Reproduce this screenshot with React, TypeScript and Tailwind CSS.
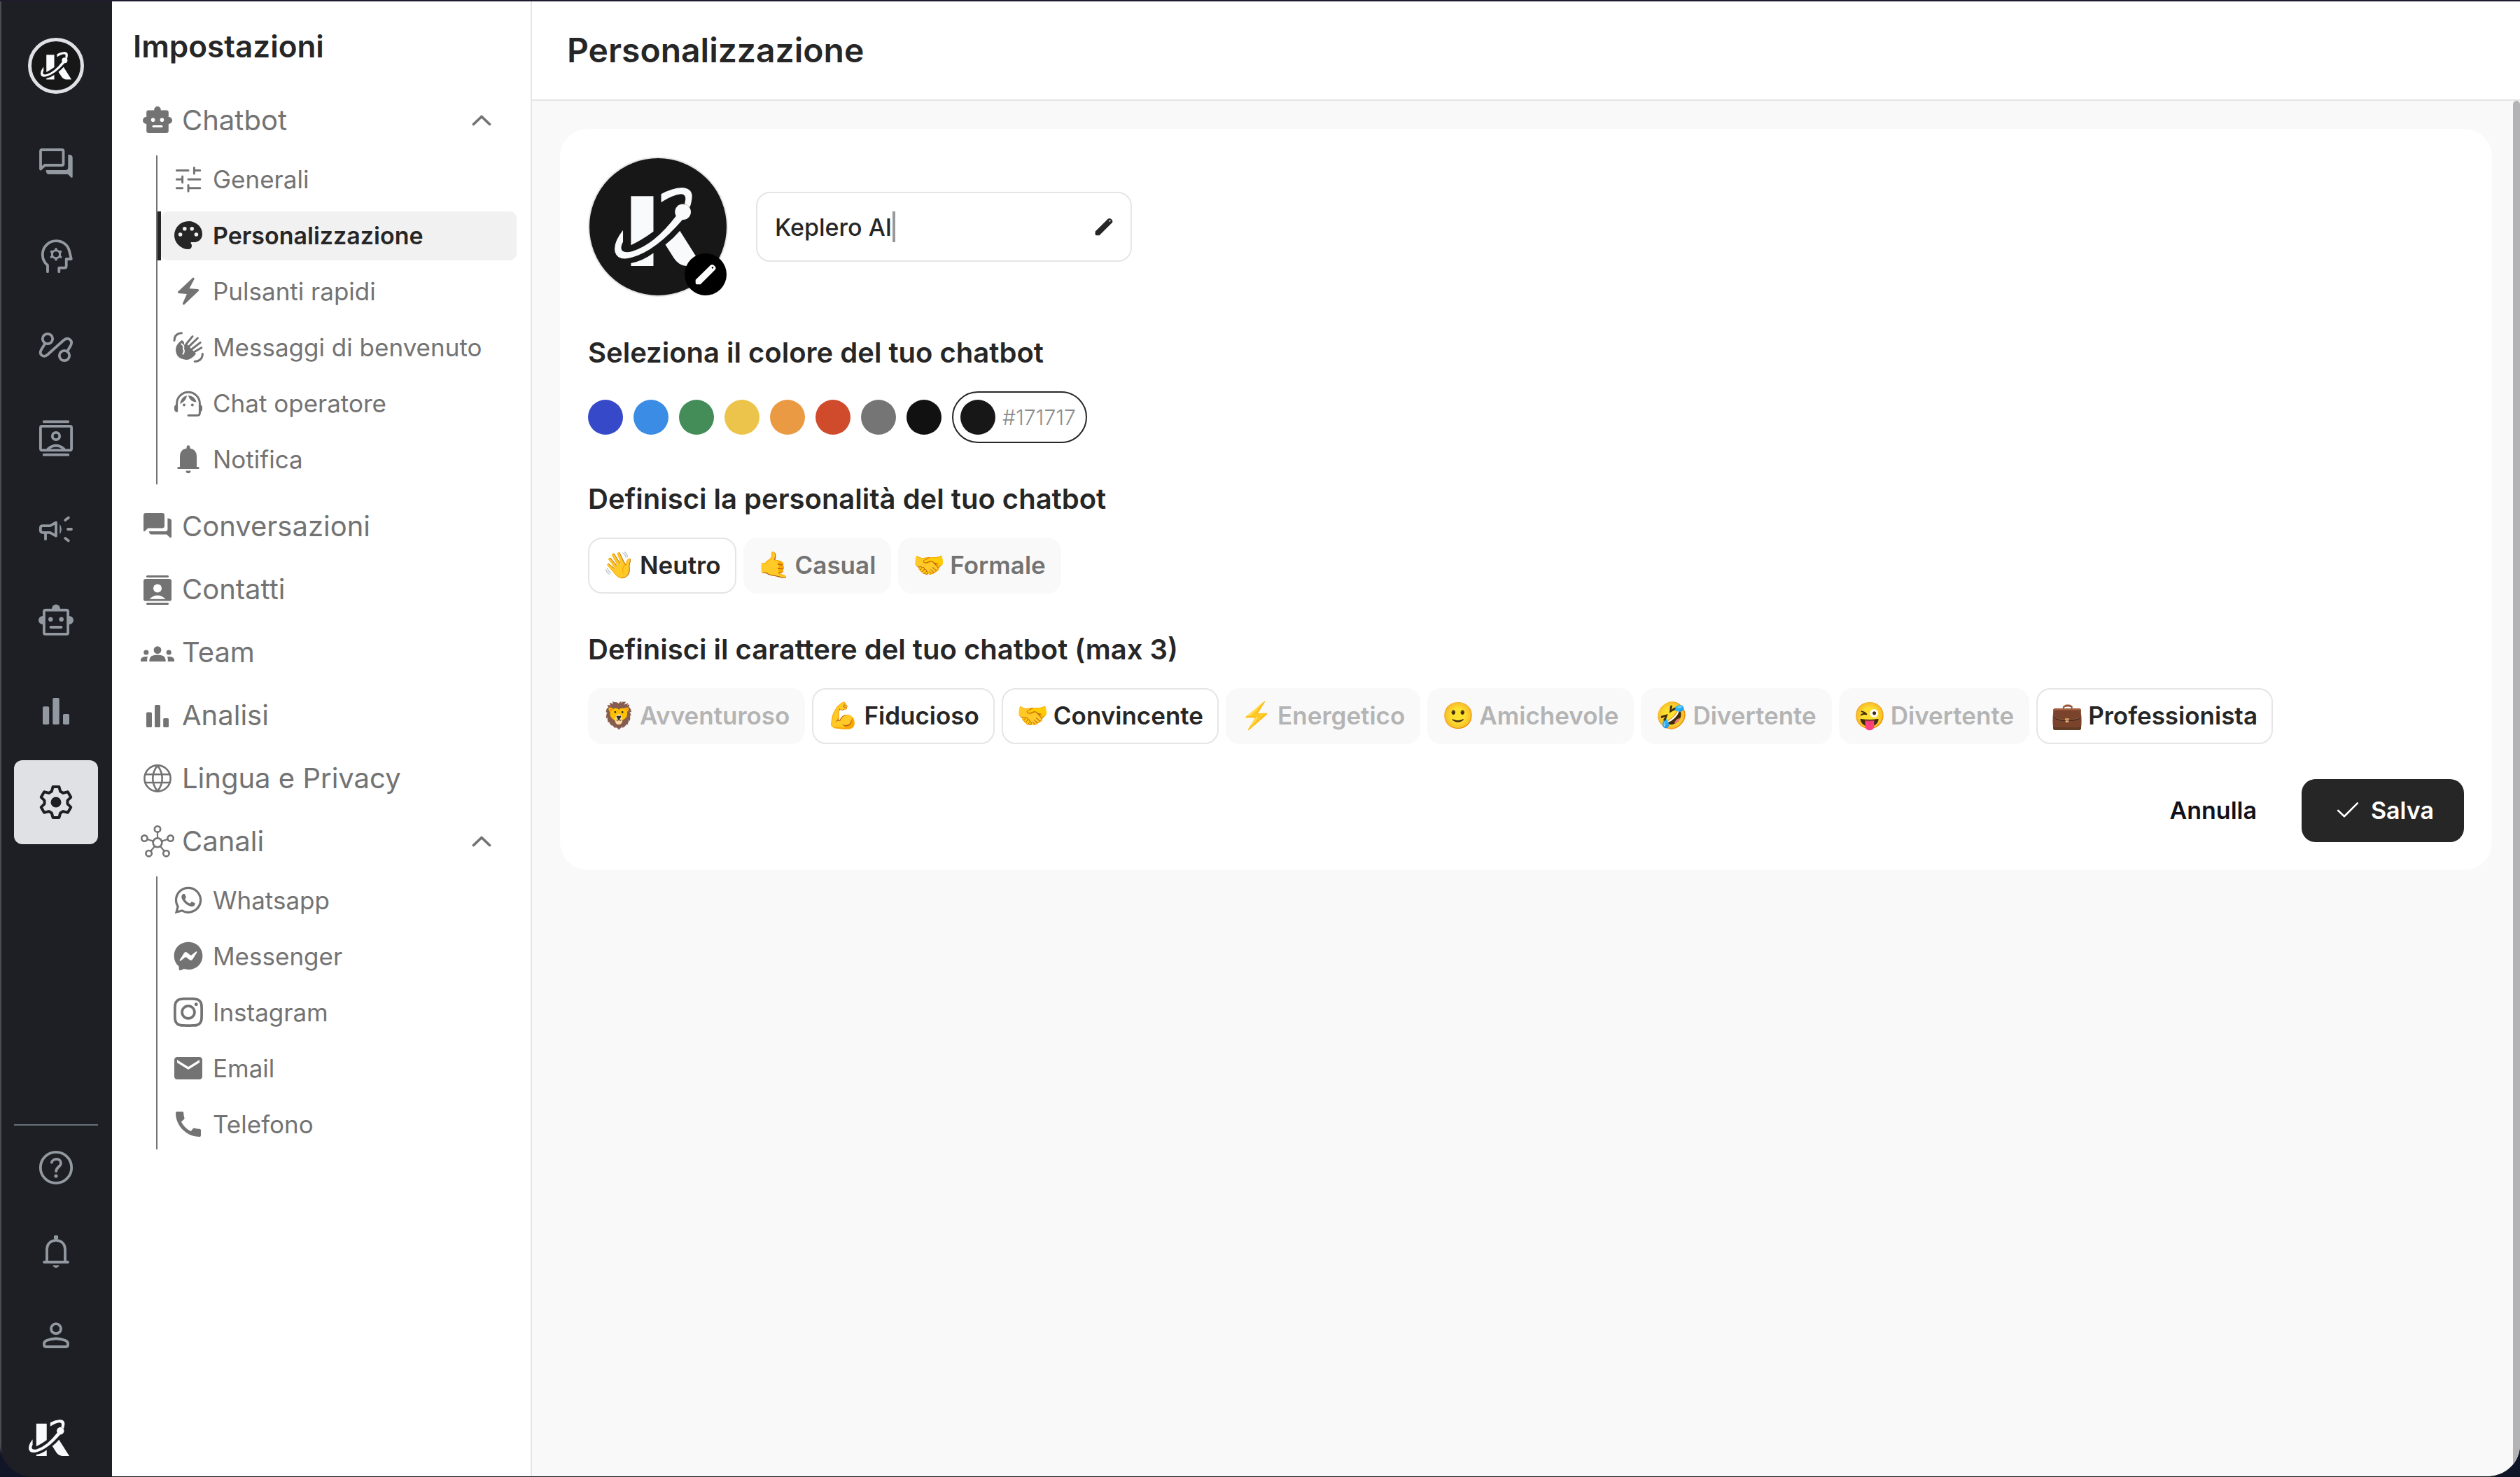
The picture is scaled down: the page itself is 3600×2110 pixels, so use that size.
import React, { useState } from "react";
import type { ReactNode } from "react";
import { FaWhatsapp, FaFacebookMessenger, FaInstagram } from "react-icons/fa";
import { MdEmail, MdCall } from "react-icons/md";

type IconProps = { children: ReactNode };

/* ---------- Brand ---------- */

function Logo({ className }: { className: string }) {
  return (
    <svg viewBox="176 180 374 336" className={className} fill="#f9fafb" aria-hidden="true">
      <path d="M246 217H342V368Q290 406 246 426Z" />
      <path d="M246 515H342V460Q292 496 246 503Z" />
      <path d="M455 365L550 515H482Q450 512 430 482L393 424Q427 398 455 365Z" />
      <path d="M212 362Q168 418 178 456Q190 496 252 478Q352 450 466 318L440 300Q345 425 252 452Q206 464 204 437Q205 424 212 412Z" />
      <circle cx="468" cy="284" r="34" />
      <path d="M375 208Q420 182 465 180Q514 184 506 230Q503 250 498 264L475 248Q488 210 460 208Q425 211 375 243Z" />
    </svg>
  );
}

function Pencil() {
  return (
    <svg viewBox="0 0 87 85" className="size-[30px]" fill="currentColor" fillRule="evenodd" aria-hidden="true">
      <path d="M2 78V65L64 4Q71-1 78 5L83 10Q88 16 83 23L22 84H7Q2 84 2 78ZM73 10L68 15L72 19L77 14Z" />
    </svg>
  );
}

/* ---------- Rail icons (60 unit grid) ---------- */

function RailIcon({ children }: IconProps) {
  return (
    <svg
      viewBox="0 0 60 60"
      className="size-15"
      fill="none"
      stroke="currentColor"
      strokeWidth="3.8"
      strokeLinecap="round"
      strokeLinejoin="round"
      aria-hidden="true"
    >
      {children}
    </svg>
  );
}

const filled = { fill: "currentColor", stroke: "none" };

function gearPath(cx: number, cy: number) {
  const tooth = [
    [-6.2, -15.4],
    [-4.4, -22],
    [4.4, -22],
    [6.2, -15.4],
  ];
  const points: string[] = [];
  for (let i = 0; i < 6; i++) {
    const a = (i * Math.PI) / 3;
    for (const [x, y] of tooth) {
      const px = cx + x * Math.cos(a) - y * Math.sin(a);
      const py = cy + x * Math.sin(a) + y * Math.cos(a);
      points.push(`${px.toFixed(2)} ${py.toFixed(2)}`);
    }
  }
  return `M${points.join("L")}Z`;
}

const railItems: { label: string; icon: ReactNode; active?: boolean }[] = [
  {
    label: "Conversazioni",
    icon: (
      <>
        <path d="M8 35.5V10Q8 8 10 8H38.5Q40.5 8 40.5 10V28Q40.5 30 38.5 30H14Z" />
        <path {...filled} d="M47.3 15H49Q53.7 15 53.7 19.5V46Q53.7 49.5 51 47L47 43H20Q15.7 43 15.7 37H43.5Q47.3 37 47.3 33Z" />
      </>
    ),
  },
  {
    label: "Conoscenza",
    icon: (
      <>
        <path d="M18 52.2V43C12.5 38.5 10.8 33 10.8 27.5A19.3 19.3 0 0 1 30 8.2C40 8.2 47 14 49 22.5L51.8 34H44.7V44Q44.7 46.7 42 46.7H34.3V52.2" />
        <circle cx="30" cy="27.3" r="5.6" strokeWidth="3" />
        <g strokeWidth="3.4">
          <path d="M30 19.7v1M30 33.9v1M23.4 23.5l.9.5M35.7 30.6l.9.5M23.4 31.1l.9-.5M35.7 24l.9-.5" />
        </g>
      </>
    ),
  },
  {
    label: "Flussi",
    icon: (
      <>
        <circle cx="18" cy="18" r="7.2" />
        <circle cx="42" cy="42" r="7.2" />
        <path d="M14.2 25L9 33.5C5 40.5 12 45.5 17.5 41L41 20C46.5 15 54.5 19.5 51.3 27L47 34.5" />
      </>
    ),
  },
  {
    label: "Contatti",
    icon: (
      <>
        <path d="M12.7 6.3H47.3M12.7 53.7H47.3" />
        <rect x="7.9" y="12.9" width="44.2" height="34.2" rx="2" />
        <circle cx="30" cy="27" r="5.2" />
        <path d="M18.5 45.5Q30 35.5 41.5 45.5" />
      </>
    ),
  },
  {
    label: "Campagne",
    icon: (
      <>
        <path d="M11 25.2H21.5L30 20.5V39.5L21.5 34.8H11Q7.8 34.8 7.8 31.6V28.4Q7.8 25.2 11 25.2ZM15 36V44.2" />
        <path {...filled} d="M35.3 22.5Q40.4 30 35.3 37.5Z" />
        <path d="M43.3 17L47.8 13.6M47 30H52M43.3 43L47.8 46.4" />
      </>
    ),
  },
  {
    label: "Chatbot",
    icon: (
      <>
        <rect x="12.9" y="15.6" width="34.2" height="34.2" rx="2" />
        <g {...filled}>
          <path d="M11 24A6 6 0 0 0 11 36ZM49 24A6 6 0 0 1 49 36ZM24 13.9A6 6.4 0 0 1 36 13.9Z" />
          <circle cx="22.3" cy="28.7" r="3.2" />
          <circle cx="37.7" cy="28.7" r="3.2" />
        </g>
        <path d="M22.5 40H37.5" />
      </>
    ),
  },
  {
    label: "Analisi",
    icon: (
      <g {...filled}>
        <rect x="11" y="23.3" width="9.2" height="25.7" rx="1.8" />
        <rect x="25.3" y="11" width="9.4" height="38" rx="1.8" />
        <rect x="40" y="34" width="9" height="15" rx="1.8" />
      </g>
    ),
  },
  {
    label: "Impostazioni",
    active: true,
    icon: (
      <>
        <path d={gearPath(30, 30)} strokeWidth="4" />
        <circle {...filled} cx="30" cy="30" r="7.5" />
      </>
    ),
  },
];

const railFooter: { label: string; icon: ReactNode }[] = [
  {
    label: "Aiuto",
    icon: (
      <>
        <circle cx="30" cy="30" r="22.2" />
        <path d="M23.8 22.6C25.5 16.5 37 16 37 23.6C37 29 30.2 29.2 30.2 35.2" />
        <circle {...filled} cx="30" cy="42" r="2.6" />
      </>
    ),
  },
  {
    label: "Notifiche",
    icon: (
      <>
        <path d="M17 44V27C17 9.5 43 9.5 43 27V44M13 45H47" />
        <circle {...filled} cx="30" cy="9.6" r="3.2" />
        <path {...filled} d="M25.4 49.5H34.6A4.8 4.8 0 0 1 25.4 49.5Z" />
      </>
    ),
  },
  {
    label: "Profilo",
    icon: (
      <>
        <circle cx="30" cy="20.2" r="7" />
        <path d="M13 43V41.5Q13 38.5 16.5 37Q30 31.5 43.5 37Q47 38.5 47 41.5V43Q47 46 44 46H16Q13 46 13 43Z" />
      </>
    ),
  },
];

/* ---------- Menu icons (24 unit grid) ---------- */

function MenuIcon({ children }: IconProps) {
  return (
    <svg
      viewBox="0 0 24 24"
      className="size-12 shrink-0"
      fill="none"
      stroke="currentColor"
      strokeWidth="1.5"
      strokeLinecap="round"
      strokeLinejoin="round"
      aria-hidden="true"
    >
      {children}
    </svg>
  );
}

function Chevron() {
  return (
    <svg viewBox="0 0 28 16" className="h-4 w-7" fill="none" stroke="currentColor" strokeWidth="3.8" strokeLinecap="round" strokeLinejoin="round" aria-hidden="true">
      <path d="M2.5 13.5L14 2.5L25.5 13.5" />
    </svg>
  );
}

type SubItem = { label: string; icon: ReactNode; active?: boolean };
type MenuItem = { label: string; icon: ReactNode; children?: SubItem[] };

const menu: MenuItem[] = [
  {
    label: "Chatbot",
    icon: (
      <MenuIcon>
        <g {...filled}>
          <rect x="4.1" y="4.8" width="15.8" height="16.2" rx="1.5" />
          <circle cx="12" cy="4.4" r="2.4" />
          <circle cx="4" cy="12" r="2.5" />
          <circle cx="20" cy="12" r="2.5" />
        </g>
        <g fill="#fff" stroke="none">
          <circle cx="8.8" cy="11.6" r="1.4" />
          <circle cx="15.2" cy="11.6" r="1.4" />
        </g>
        <path d="M9 16.3H15" stroke="#fff" />
      </MenuIcon>
    ),
    children: [
      {
        label: "Generali",
        icon: (
          <MenuIcon>
            <path d="M3.7 5.8H12M16.2 3.7V8M16.2 5.8H20.4M3.7 12.1H7.8M7.8 10V14.4M12 12.1H20.4M3.7 18.4H7.8M12 16.2V20.6M12 18.4H20.4" />
          </MenuIcon>
        ),
      },
      {
        label: "Personalizzazione",
        active: true,
        icon: (
          <MenuIcon>
            <path
              {...filled}
              d="M12 22q-2.05 0-3.875-.788t-3.187-2.15-2.15-3.187T2 12q0-2.075.813-3.9t2.2-3.175T8.25 2.788 12.2 2q2 0 3.775.688t3.113 1.9 2.125 2.875T22 11.05q0 2.875-1.75 4.413T16 17h-1.85q-.225 0-.312.125t-.088.275q0 .3.375.863t.375 1.287q0 1.25-.687 1.85T12 22"
            />
            <g fill="#f1f1f1" stroke="none">
              <circle cx="6.3" cy="11.5" r="1.4" />
              <circle cx="9.4" cy="7.4" r="1.4" />
              <circle cx="14.6" cy="7.4" r="1.4" />
              <circle cx="17.7" cy="11.5" r="1.4" />
            </g>
          </MenuIcon>
        ),
      },
      {
        label: "Pulsanti rapidi",
        icon: (
          <MenuIcon>
            <path d="M15.6 3L11.6 10.7L18.8 11.3L8.7 20.9L12 13.4L5.2 12.8Z" fill="currentColor" />
          </MenuIcon>
        ),
      },
      {
        label: "Messaggi di benvenuto",
        icon: (
          <MenuIcon>
            <path d="M2 7.2Q2.2 2.2 7.2 1.9M16.6 22.2Q22 22 22.2 16.8" />
            <path {...filled} d="M7.3 7Q9.5 7.8 8.9 10.4L10.5 9.2L17.5 16.8Q14 21 10.5 21Q3 20.4 3 13.5Q3.2 10 7.3 7Z" />
            <path d="M10.6 9.6L15 4.3M12.4 11.6L18.7 5.5M14.2 13.6L20.6 8.7M15.8 15.6L21.4 12.4" />
            <path d="M7.2 9.7Q9.4 11.3 8.4 13Q9.6 15 8.2 16.8" stroke="#fff" strokeWidth="1" />
          </MenuIcon>
        ),
      },
      {
        label: "Chat operatore",
        icon: (
          <MenuIcon>
            <path d="M3.8 17.5V12.3A8.2 8.2 0 0 1 20.2 12.3V19Q20.2 20.7 18.5 20.7H12" />
            <g {...filled}>
              <path d="M4.4 13V18.3Q2 18.6 2 16V14.8Q2 13 4.4 13ZM19.6 13V18.3Q22 18.6 22 16V14.8Q22 13 19.6 13Z" />
              <path d="M6.2 12.6Q6.4 7.8 11 6.5Q10.8 10 6.2 12.6ZM11.9 6.4Q16.6 6.8 17.8 11.3Q13.2 11.2 11.9 6.4Z" />
              <circle cx="9" cy="13.3" r="1" />
              <circle cx="14.9" cy="13.3" r="1" />
            </g>
          </MenuIcon>
        ),
      },
      {
        label: "Notifica",
        icon: (
          <MenuIcon>
            <path {...filled} d="M6 18.2V10.2Q6 5 10.8 4.3V3.3Q10.8 2.1 12 2.1Q13.2 2.1 13.2 3.3V4.3Q18 5 18 10.2V18.2ZM10.2 20.2H13.8Q13.6 22 12 22Q10.4 22 10.2 20.2Z" />
            <path d="M4.9 18.3H19.1" />
          </MenuIcon>
        ),
      },
    ],
  },
  {
    label: "Conversazioni",
    icon: (
      <MenuIcon>
        <g {...filled}>
          <path d="M2 15V4Q2 2.5 3.5 2.5H15.5Q17 2.5 17 4V11.5Q17 13.2 15.5 13.2H5.2L3 15.4Q2 16 2 15Z" />
          <path d="M19.2 6.2Q22 6.2 22 8V19Q22 20.8 20.5 19.6L18.6 17.8H8Q6 17.8 6 15.5H17.7Q19.2 15.5 19.2 14Z" />
        </g>
      </MenuIcon>
    ),
  },
  {
    label: "Contatti",
    icon: (
      <MenuIcon>
        <path d="M4.7 2.7H19.3M4.7 22.3H19.3" />
        <rect {...filled} x="2" y="4.5" width="20" height="15.8" rx="1.6" />
        <g fill="#fff" stroke="none">
          <circle cx="12" cy="11.2" r="3" />
          <path d="M6.2 18.9Q12 13.6 17.8 18.9Z" />
        </g>
      </MenuIcon>
    ),
  },
  {
    label: "Team",
    icon: (
      <MenuIcon>
        <g {...filled}>
          <circle cx="12" cy="10.3" r="2.7" />
          <circle cx="3.9" cy="12" r="1.8" />
          <circle cx="20.1" cy="12" r="1.8" />
          <path d="M6.2 18.5V17.2Q6.4 13.8 12 13.8Q17.6 13.8 17.8 17.2V18.5ZM0 18.5V17.3Q.3 14.6 5 15Q4.3 16.6 4.6 18.5ZM24 18.5V17.3Q23.7 14.6 19 15Q19.7 16.6 19.4 18.5Z" />
        </g>
      </MenuIcon>
    ),
  },
  {
    label: "Analisi",
    icon: (
      <MenuIcon>
        <g {...filled}>
          <rect x="4" y="9.7" width="4" height="10.8" rx=".8" />
          <rect x="10" y="4.5" width="4" height="16" rx=".8" />
          <rect x="16.1" y="14" width="3.9" height="6.5" rx=".8" />
        </g>
      </MenuIcon>
    ),
  },
  {
    label: "Lingua e Privacy",
    icon: (
      <MenuIcon>
        <g strokeWidth="1.3">
          <circle cx="12" cy="12" r="9.3" />
          <path d="M12 2.8C7.5 8.5 7.5 15.5 12 21.2C16.5 15.5 16.5 8.5 12 2.8ZM3.2 9.1H20.8M3.2 15H20.8" />
        </g>
      </MenuIcon>
    ),
  },
  {
    label: "Canali",
    icon: (
      <MenuIcon>
        <g strokeWidth="1.3">
          <circle cx="12" cy="12.9" r="3.2" />
          <circle cx="12" cy="3.2" r="2.1" />
          <circle cx="2.7" cy="9.8" r="2.1" />
          <circle cx="21.3" cy="9.8" r="2.1" />
          <circle cx="5.8" cy="20.6" r="2.1" />
          <circle cx="18.2" cy="20.6" r="2.1" />
        </g>
        <path strokeWidth="1.1" d="M12 5.3V9.7M4.8 10.5L8.9 11.8M19.2 10.5L15.1 11.8M7.1 19L10 15.5M16.9 19L14 15.5" />
      </MenuIcon>
    ),
    children: [
      { label: "Whatsapp", icon: <FaWhatsapp className="m-[2px] size-11 shrink-0" aria-hidden /> },
      { label: "Messenger", icon: <FaFacebookMessenger className="m-[3px] size-[42px] shrink-0" aria-hidden /> },
      { label: "Instagram", icon: <FaInstagram className="size-12 shrink-0" aria-hidden /> },
      { label: "Email", icon: <MdEmail className="size-12 shrink-0" aria-hidden /> },
      { label: "Telefono", icon: <MdCall className="size-12 shrink-0" aria-hidden /> },
    ],
  },
];

/* ---------- Sections ---------- */

function Rail() {
  return (
    <nav aria-label="Principale" className="flex w-40 shrink-0 flex-col items-center border-l-2 border-[#4b4c51] bg-[#1e1f24] pt-13 pr-[2px] text-[#9399a1]">
      <div className="flex size-20 items-center justify-center rounded-full border-[5px] border-[#e0e1e5] bg-[#171717]">
        <Logo className="w-11" />
      </div>
      <div className="mt-[42px] flex flex-col gap-[10px]">
        {railItems.map((item) => (
          <button
            key={item.label}
            type="button"
            aria-label={item.label}
            className={
              item.active
                ? "flex size-30 items-center justify-center rounded-xl bg-[#e0e1e5] text-[#1e1f24]"
                : "flex size-30 items-center justify-center rounded-xl"
            }
          >
            <RailIcon>{item.icon}</RailIcon>
          </button>
        ))}
      </div>
      <div className="mt-auto flex flex-col border-t-2 border-[#66707a]">
        {railFooter.map((item) => (
          <button key={item.label} type="button" aria-label={item.label} className="flex size-30 items-center justify-center">
            <RailIcon>{item.icon}</RailIcon>
          </button>
        ))}
      </div>
      <div className="mt-15 mb-[29px] w-full pl-[39px]">
        <Logo className="w-[58px]" />
      </div>
    </nav>
  );
}

function Sidebar() {
  return (
    <aside className="w-[600px] shrink-0 border-r-2 border-[#e5e5e5] bg-white px-5 text-[#737373]">
      <h2 className="mt-[38px] px-[10px] text-[44px] leading-[52px] font-semibold text-[#262626]">Impostazioni</h2>
      <ul className="mt-10 flex flex-col gap-[10px]">
        {menu.map((item) => (
          <li key={item.label}>
            <button type="button" className="flex h-20 w-full items-center gap-[11px] pr-9 pl-[21px] text-left text-[40px]">
              {item.icon}
              <span className="grow">{item.label}</span>
              {item.children && <Chevron />}
            </button>
            {item.children && (
              <ul className="mt-[10px] mb-[10px] ml-[43px] flex flex-col gap-[10px] border-l-2 border-[#737373]">
                {item.children.map((sub) => (
                  <li key={sub.label} className={sub.active ? "border-l-[5px] border-[#262626]" : "border-l-[5px] border-transparent"}>
                    <a
                      href="#"
                      aria-current={sub.active ? "page" : undefined}
                      className={
                        sub.active
                          ? "flex h-[70px] items-center gap-[11px] rounded-[10px] bg-[#f1f1f1] pb-[2px] pl-[15px] text-[34px] font-semibold text-[#262626]"
                          : "flex h-[70px] items-center gap-[11px] rounded-[10px] pb-[2px] pl-[15px] text-[35px]"
                      }
                    >
                      {sub.icon}
                      {sub.label}
                    </a>
                  </li>
                ))}
              </ul>
            )}
          </li>
        ))}
      </ul>
    </aside>
  );
}

const swatches = ["#3549c9", "#3a8ce4", "#448c58", "#edc44b", "#ea9a43", "#d04a2c", "#757575", "#101110"];

const personalities = [
  { emoji: "👋", label: "Neutro", on: true },
  { emoji: "🤙", label: "Casual", on: false },
  { emoji: "🤝", label: "Formale", on: false },
];

const traits = [
  { emoji: "🦁", label: "Avventuroso", on: false },
  { emoji: "💪", label: "Fiducioso", on: true },
  { emoji: "🤝", label: "Convincente", on: true },
  { emoji: "⚡️", label: "Energetico", on: false },
  { emoji: "🙂", label: "Amichevole", on: false },
  { emoji: "🤣", label: "Divertente", on: false },
  { emoji: "😜", label: "Divertente", on: false },
  { emoji: "💼", label: "Professionista", on: true },
];

function Chip({ emoji, label, on, dim }: { emoji: string; label: string; on: boolean; dim?: boolean }) {
  return (
    <button
      type="button"
      aria-pressed={on}
      className={
        on
          ? "flex h-20 items-center gap-[8px] rounded-[20px] border-2 border-[#e5e5e5] bg-white px-5 pb-[2px] text-[35px] font-semibold text-[#262626]"
          : dim
            ? "flex h-20 items-center gap-[8px] rounded-[20px] border-2 border-[#f9f9f9] bg-[#f9f9f9] px-5 pb-[2px] text-[35px] font-semibold text-[#b4b4b4]"
            : "flex h-20 items-center gap-[8px] rounded-[20px] border-2 border-[#f9f9f9] bg-[#f9f9f9] px-5 pb-[2px] text-[35px] font-semibold text-[#737373]"
      }
    >
      <span className="flex w-[44px] justify-center text-[37px] text-black" aria-hidden="true">
        {emoji}
      </span>
      {label}
    </button>
  );
}

function SectionTitle({ children }: { children: ReactNode }) {
  return <h2 className="mt-[50px] mb-[25px] text-[40px] leading-[60px] font-semibold text-[#262626]">{children}</h2>;
}

function Customization() {
  const [name, setName] = useState("Keplero AI");
  return (
    <section className="m-10 rounded-[40px] bg-white p-10">
      <div className="flex items-center gap-10">
        <div className="relative flex size-50 items-center justify-center rounded-full border-2 border-[#e5e5e5] bg-[#171717]">
          <Logo className="w-[125px]" />
          <button type="button" aria-label="Cambia immagine" className="absolute right-0 bottom-0 flex size-15 items-center justify-center rounded-full bg-black text-white">
            <Pencil />
          </button>
        </div>
        <div className="relative flex h-[100px] w-[537px] items-center rounded-[20px] border-2 border-[#e5e5e5] pr-[25px] pl-[25px] text-[#262626]">
          <input
            aria-label="Nome del chatbot"
            value={name}
            onChange={(e) => setName(e.target.value)}
            className="min-w-0 grow text-[34px] font-medium outline-none"
          />
          <Pencil />
          <span className="absolute left-[193px] h-11 w-1 bg-[#999]" aria-hidden="true" />
        </div>
      </div>

      <SectionTitle>Seleziona il colore del tuo chatbot</SectionTitle>
      <div className="flex items-center gap-[15px]">
        {swatches.map((color) => (
          <button key={color} type="button" aria-label={`Colore ${color}`} className="size-[50px] rounded-full" style={{ backgroundColor: color }} />
        ))}
        <button type="button" className="flex h-[74px] items-center gap-[10px] rounded-full border-2 border-[#262626] pr-[14px] pl-[10px] text-[30px] font-light text-[#8c8c8c]">
          <span className="size-[50px] rounded-full bg-[#171717]" />
          #171717
        </button>
      </div>

      <SectionTitle>Definisci la personalità del tuo chatbot</SectionTitle>
      <div className="flex flex-wrap gap-[10px]">
        {personalities.map((p) => (
          <Chip key={p.emoji} {...p} />
        ))}
      </div>

      <SectionTitle>Definisci il carattere del tuo chatbot (max 3)</SectionTitle>
      <div className="flex flex-wrap gap-[10px]">
        {traits.map((t) => (
          <Chip key={t.emoji} {...t} dim />
        ))}
      </div>

      <div className="mt-[50px] flex items-center justify-end gap-5 text-[34px] font-semibold">
        <button type="button" className="h-[90px] px-11 pb-[2px] text-[#11111b]">
          Annulla
        </button>
        <button type="button" className="flex h-[90px] items-center gap-[17px] rounded-[20px] bg-[#262626] pr-[43px] pb-[2px] pl-[50px] text-white">
          <svg viewBox="0 0 34 26" className="h-6 w-8" fill="none" stroke="currentColor" strokeWidth="2.8" strokeLinecap="round" strokeLinejoin="round" aria-hidden="true">
            <path d="M2 14L11.5 23L32 2.5" />
          </svg>
          Salva
        </button>
      </div>
    </section>
  );
}

export default function App() {
  return (
    <div className="h-screen bg-[#111528] font-['Inter','Liberation_Sans',sans-serif]">
      <div className="flex h-full overflow-hidden rounded-b-[46px] border-t-2 border-b border-t-[#1f1a2e] border-b-[#1b1b20]">
        <Rail />
        <Sidebar />
        <main className="flex min-w-0 grow flex-col bg-[#f9f9f9]">
          <header className="border-b-2 border-[#e5e5e5] bg-white px-[50px] py-10">
            <h1 className="text-[48px] leading-[60px] font-semibold text-[#262626]">Personalizzazione</h1>
          </header>
          <div className="flex grow">
            <div className="min-w-0 grow">
              <Customization />
            </div>
            <div className="-ml-[10px] w-[10px] shrink-0 rounded-t-full bg-[#b3b3b5]" />
          </div>
        </main>
      </div>
    </div>
  );
}
